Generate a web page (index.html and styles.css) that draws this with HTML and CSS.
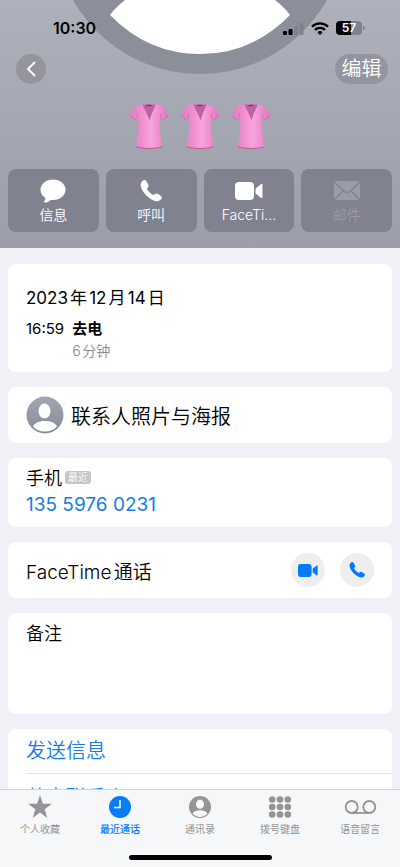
FILE: index.html
```html
<!DOCTYPE html>
<html lang="zh-CN">
<head>
<meta charset="utf-8">
<meta name="viewport" content="width=device-width, initial-scale=1">
<title>联系人</title>
<link rel="stylesheet" href="styles.css">
</head>
<body>
<svg class="defs" width="0" height="0" aria-hidden="true">
  <defs>
    <linearGradient id="avatar-fill" x1="0" y1="0" x2="0" y2="1">
      <stop offset="0" stop-color="#a2a6b2"/><stop offset="1" stop-color="#868b98"/>
    </linearGradient>
    <linearGradient id="cloth" x1="0" y1="0" x2="1" y2="0">
      <stop offset="0" stop-color="#e07fc0"/><stop offset=".3" stop-color="#ee8dcd"/><stop offset=".55" stop-color="#f7a5dc"/><stop offset=".8" stop-color="#ee8acc"/><stop offset="1" stop-color="#d974b5"/>
    </linearGradient>
    <symbol id="blouse" viewBox="0 0 40 46">
      <path d="M13 1C8 2 5.500 3 3.800 6L.4 12.200c1.700 2.200 4.400 3.600 7.400 4L8.600 15c1.200 5.500 1.300 10 .2 15L6.600 43.500c5 2.200 21.800 2.200 26.800 0L31.200 30c-1.100-5-1-9.500.2-15l.8 1.200c3-.4 5.700-1.800 7.400-4L36.200 6C34.500 3 32 2 27 1 23 .4 17 .4 13 1z" fill="url(#cloth)"/>
      <path d="M13.500 1Q20 .4 26.500 1C26 4 23 8 20.600 17 17.500 8 14.300 4.500 13.500 1z" fill="#b9649e"/>
      <path d="M17.500 2h5" stroke="#6f3459" stroke-width="1.200"/>
      <path d="M.8 12.200c1.700 2.200 4.400 3.400 7 3.800M39.200 12.200c-1.700 2.200-4.400 3.400-7 3.800M8.600 15 8.300 10M31.400 15 31.700 10" fill="none" stroke="#c470a8" stroke-width=".8"/>
      <path d="M6.700 43.200c5 2.300 21.600 2.300 26.600 0" fill="none" stroke="#b45c94" stroke-width="1"/>
    </symbol>
    <symbol id="phone" viewBox="0 0 20 20">
      <path d="M2.200 1C3.500-.3 4.900-.2 5.800 1.200L7.400 4c.7 1.200.5 2-.4 2.900-.7.700-.7 1.200-.2 2 1.100 1.700 2.600 3.200 4.300 4.300.8.500 1.300.5 2-.2.900-.9 1.700-1.100 2.900-.4l2.800 1.700c1.400.9 1.500 2.200.2 3.500-1.900 2-4.500 2-7.200.7C7.500 16.300 3.700 12.500 1.500 8.200.1 5.500.3 2.900 2.200 1z"/>
    </symbol>
    <symbol id="video" viewBox="0 0 28 18">
      <rect width="19" height="18" rx="4"/><path d="M20.500 6.700 25.800 2.200c.9-.7 1.700-.3 1.700.8v12c0 1.100-.8 1.500-1.700.8l-5.300-4.500z"/>
    </symbol>
  </defs>
</svg>
<div class="app">
  <main class="content">
    <header class="hero">
      <svg class="poster" viewBox="0 0 400 76" aria-hidden="true">
        <circle cx="200" cy="-72" r="146" fill="#8b8f9a"/>
        <path d="M125 0Q115 8 110 15 148 54 200 54T290 15Q285 8 275 0z" fill="#fff"/>
      </svg>
      <div class="status">
        <time class="clock">10:30</time>
        <div class="signals">
          <svg width="21" height="13" viewBox="0 0 21 13" aria-label="信号">
            <rect y="9" width="4" height="4" rx="1"/><rect x="5.500" y="7" width="4" height="6" rx="1"/><g fill="#7f828d"><rect x="11" y="4" width="4" height="9" rx="1"/><rect x="16.500" y="1" width="4" height="12" rx="1"/></g>
          </svg>
          <svg width="18" height="13" viewBox="0 0 18 13" fill="none" stroke="#000" stroke-width="2.400" aria-label="无线网络">
            <path d="M1 4.600a11.500 11.500 0 0 1 16 0M4 7.900a7.200 7.200 0 0 1 10 0"/><path d="M6.300 10.200a4 4 0 0 1 5.400 0L9 13z" fill="#000" stroke="none"/>
          </svg>
          <span class="battery"><span class="level">57</span></span>
        </div>
      </div>
      <nav class="toolbar">
        <button class="round back" aria-label="返回"><svg width="10" height="16" viewBox="0 0 10 16" fill="none" stroke="#fff" stroke-width="1.800" stroke-linecap="round" stroke-linejoin="round"><path d="M8.500 1.500 2 8l6.500 6.500"/></svg></button>
        <button class="round edit">编辑</button>
      </nav>
      <div class="name" role="img" aria-label="联系人姓名">
        <svg><use href="#blouse"/></svg><svg><use href="#blouse"/></svg><svg><use href="#blouse"/></svg>
      </div>
      <div class="actions">
        <button><svg width="26" height="24" viewBox="0 0 26 24" fill="#fff"><path d="M13 .5C20 .5 25.500 4.900 25.500 10.700S20 21 13 21c-.8 0-1.500 0-2.200-.1C9 22.500 6.800 23.500 4.500 23.500c-.7 0-.8-.6-.4-1 .9-1 1.400-2.200 1.500-3.500C2.500 17.200.5 14.200.5 10.700.5 4.900 6 .5 13 .5z"/></svg><span>信息</span></button>
        <button><svg width="22" height="22" viewBox="0 0 20 20" fill="#fff"><use href="#phone"/></svg><span>呼叫</span></button>
        <button><svg width="28" height="18" fill="#fff"><use href="#video"/></svg><span>FaceTi...</span></button>
        <button class="off" disabled><svg width="26" height="19" viewBox="0 0 26 19"><rect width="26" height="19" rx="2" fill="#9a9ca8"/><path d="m0 1 10.500 9.500c1.600 1.400 3.400 1.400 5 0L26 1M.5 18.500l9-9M25.500 18.500l-9-9" fill="none" stroke="#80828f" stroke-width="1.500"/></svg><span>邮件</span></button>
      </div>
    </header>
    <div class="cards">
      <section class="card log">
        <h2>2023年12月14日</h2>
        <dl><dt>16:59</dt><dd><b>去电</b><span>6分钟</span></dd></dl>
      </section>
      <a class="card row" href="#poster">
        <svg width="38" height="38" viewBox="0 0 38 38"><circle cx="19" cy="19" r="18.500" fill="url(#avatar-fill)"/><ellipse cx="18.500" cy="15" rx="6" ry="7.500" fill="#fff"/><path d="M7 30.500C9 26.500 13.500 25 19 25s10 1.500 12 5.500C28 33.700 24 35.500 19 35.500S10 33.700 7 30.500z" fill="#fff"/></svg>
        <span>联系人照片与海报</span>
      </a>
      <section class="card mobile">
        <div class="label">手机<small>最近</small></div>
        <a href="tel:13559760231">135 5976 0231</a>
      </section>
      <section class="card row facetime">
        <span>FaceTime通话</span>
        <div class="calls">
          <button aria-label="视频通话"><svg width="20" height="13" fill="#007aff"><use href="#video"/></svg></button>
          <button aria-label="语音通话"><svg width="16" height="16" fill="#007aff"><use href="#phone"/></svg></button>
        </div>
      </section>
      <section class="card notes"><label for="note">备注</label><textarea id="note"></textarea></section>
      <section class="card links"><a href="#message">发送信息</a><a href="#share">共享联系人</a></section>
    </div>
  </main>
  <nav class="tabs">
    <div class="items">
      <a href="#fav"><svg viewBox="0 0 24 24"><path d="m12 0 2.900 8.700H24l-7.400 5.500L19.400 23 12 17.600 4.600 23l2.800-8.800L0 8.700h9.100z"/></svg><span>个人收藏</span></a>
      <a class="active" href="#recent"><svg viewBox="0 0 24 24"><circle cx="12" cy="12" r="11"/><path d="M12 5v7.500H6" fill="none" stroke="#fff" stroke-width="1.500"/></svg><span>最近通话</span></a>
      <a href="#contacts"><svg viewBox="0 0 24 24"><circle cx="12" cy="12" r="11"/><ellipse cx="12" cy="9.200" rx="4" ry="4.600" fill="#f6f6f8"/><path d="M4.500 18.500C6 16 8.500 15.200 12 15.200s6 .8 7.500 3.300C17.500 20.700 15 22 12 22s-5.500-1.300-7.500-3.500z" fill="#f6f6f8"/></svg><span>通讯录</span></a>
      <a href="#keypad"><svg viewBox="0 0 24 24"><circle cx="4.200" cy="4.500" r="3.300"/><circle cx="12" cy="4.500" r="3.300"/><circle cx="19.800" cy="4.500" r="3.300"/><circle cx="4.200" cy="12" r="3.300"/><circle cx="12" cy="12" r="3.300"/><circle cx="19.800" cy="12" r="3.300"/><circle cx="4.200" cy="19.500" r="3.300"/><circle cx="12" cy="19.500" r="3.300"/><circle cx="19.800" cy="19.500" r="3.300"/></svg><span>拨号键盘</span></a>
      <a href="#voicemail"><svg class="wide" viewBox="0 0 32 24" fill="none" stroke="#949496" stroke-width="1.800"><circle cx="7.200" cy="12" r="6"/><circle cx="24.800" cy="12" r="6"/><path d="M7.200 18h17.600"/></svg><span>语音留言</span></a>
    </div>
    <div class="home"></div>
  </nav>
</div>
</body>
</html>
```
FILE: styles.css
```css
* { box-sizing: border-box; }
body {
  margin: 0;
  background: #f1f0f7;
  color: #000;
  font-family: Inter, "Noto Sans CJK SC", sans-serif;
  font-weight: 350;
  text-autospace: normal;
}
button { border: 0; padding: 0; font: inherit; color: inherit; }
a { color: inherit; text-decoration: none; }
svg { display: block; flex: none; }
.defs { position: absolute; }
.app { display: flex; flex-direction: column; height: 100vh; }
.content { flex: 1; min-height: 0; overflow-y: auto; scrollbar-width: none; }

.hero {
  position: relative;
  padding: 16px 8px;
  background: linear-gradient(#aeb1bc, #9b9da9);
}
.poster { position: absolute; top: 0; left: 0; width: 100%; }
.status, .toolbar {
  position: relative;
  display: flex;
  justify-content: space-between;
  align-items: center;
}
.status { height: 24px; padding: 0 30px 0 45px; }
.clock { font-size: 16px; font-weight: 600; }
.signals { display: flex; align-items: center; gap: 7px; }
.battery {
  position: relative;
  width: 26px;
  height: 14px;
  border-radius: 4px;
  background: linear-gradient(90deg, #000 57%, #7f828d 57%);
  color: #fff;
  font-size: 12px;
  font-weight: 600;
  line-height: 14px;
  text-align: center;
}
.battery::after {
  content: "";
  position: absolute;
  top: 5px;
  right: -3px;
  width: 2px;
  height: 4px;
  border-radius: 0 2px 2px 0;
  background: #7f828d;
}
.level { display: block; }
.toolbar { margin-top: 14px; padding: 0 4px 0 8px; }
.round {
  display: flex;
  align-items: center;
  justify-content: center;
  width: 30px;
  height: 30px;
  border-radius: 15px;
  background: #92959d;
  color: #fff;
}
.edit { width: 53px; font-size: 20px; line-height: 30px; }
.name { display: flex; justify-content: center; gap: 11px; margin: 19px 0; }
.name svg { width: 40px; height: 47px; }
.actions { display: grid; grid-template-columns: repeat(4, 1fr); gap: 7px; }
.actions button {
  display: grid;
  grid-template-rows: 26px 22px;
  align-content: center;
  place-items: center;
  height: 63px;
  padding-top: 2px;
  border-radius: 8px;
  background: #80828f;
  color: #fff;
  font-size: 14px;
  line-height: 20px;
}
.actions .off { color: #9a9ca8; }

.cards { display: grid; gap: 15px; padding: 16px 8px; }
.card { padding: 0 18px; border-radius: 8px; background: #fff; }
.log { height: 108px; padding-top: 22px; font-weight: 400; }
.log h2 { margin: 0 0 8px; font-size: 17px; font-weight: inherit; line-height: 24px; }
.log dl { display: flex; gap: 8px; margin: 0; font-size: 15px; line-height: 22px; }
.log dd { margin: 0; }
.log b, .log dd span { display: block; }
.log b { font-weight: 600; }
.log dd span { color: #89898b; font-size: 14px; font-weight: 350; }
.row { display: flex; align-items: center; gap: 7px; height: 56px; font-size: 20px; }
.mobile { height: 69px; padding-top: 8px; }
.label { display: flex; align-items: center; gap: 3px; font-size: 18px; line-height: 26px; }
.label small {
  padding: 0 3px;
  border-radius: 3px;
  margin-bottom: 4px;
  background: #c6c6c9;
  color: #fff;
  font-size: 10px;
  line-height: 13px;
}
.mobile a { font-size: 19px; font-weight: 400; line-height: 26px; color: #167ce9; }
.facetime { justify-content: space-between; font-size: 19px; }
.calls { display: flex; gap: 15px; }
.calls button {
  display: grid;
  place-items: center;
  width: 34px;
  height: 34px;
  border-radius: 50%;
  background: #eeeeef;
}
.notes { height: 101px; padding-top: 8px; font-size: 18px; line-height: 26px; }
.notes label { display: block; }
.notes textarea {
  display: block;
  width: 100%;
  height: 56px;
  padding: 0;
  border: 0;
  outline: 0;
  background: none;
  font: inherit;
  resize: none;
}
.links { padding-right: 0; color: #167ce9; font-size: 20px; }
.links a { display: block; line-height: 44px; }
.links a + a { padding-top: 2px; border-top: 1px solid #e3e3e6; }

.tabs { border-top: 1px solid #d3d3d8; background: #f6f7f9; }
.items { display: grid; grid-template-columns: repeat(5, 1fr); padding-top: 5px; }
.items a {
  display: flex;
  flex-direction: column;
  align-items: center;
  gap: 2px;
  color: #949496;
  fill: currentColor;
  font-size: 10px;
  font-weight: 400;
  line-height: 16px;
}
.items svg { width: 24px; height: 24px; }
.items .wide { width: 33px; fill: none; }
.items .active { color: #087cf8; font-weight: 500; }
.home { width: 143px; height: 5px; margin: 18px auto 7px; border-radius: 3px; background: #000; }
```
